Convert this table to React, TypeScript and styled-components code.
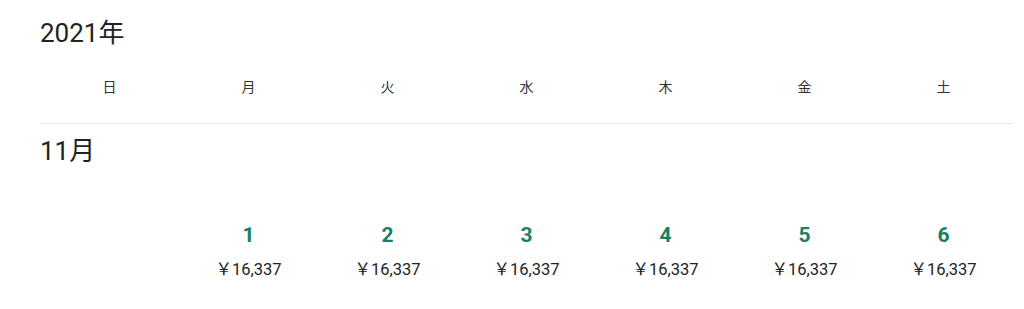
import styled, { createGlobalStyle } from 'styled-components'

const GlobalStyle = createGlobalStyle`
    body {
        margin: 0;
        background: #ffffff;
        font-family: Roboto, "Noto Sans CJK JP", sans-serif;
        color: #222222;
    }
`

const WEEKDAYS = ['日', '月', '火', '水', '木', '金', '土']

const days = [
    { day: 1, price: '16,337', col: 2 },
    { day: 2, price: '16,337', col: 3 },
    { day: 3, price: '16,337', col: 4 },
    { day: 4, price: '16,337', col: 5 },
    { day: 5, price: '16,337', col: 6 },
    { day: 6, price: '16,337', col: 7 },
]

const App = () => {
    return (
        <>
            <GlobalStyle />
            <Container>
                <Year>2021年</Year>
                <WeekRow>
                    {WEEKDAYS.map((w) => (
                        <WeekDay key={w}>{w}</WeekDay>
                    ))}
                </WeekRow>
                <Divider />
                <Month>11月</Month>
                <DayGrid>
                    {days.map((d) => (
                        <DayCell key={d.day} $col={d.col}>
                            <DayNumber>{d.day}</DayNumber>
                            <Price>￥{d.price}</Price>
                        </DayCell>
                    ))}
                </DayGrid>
            </Container>
        </>
    )
}

export default App

const Container = styled.div`
    display: flex;
    flex-direction: column;
    width: 973px;
    margin-left: 40px;
    padding-top: 18px;
`

const Year = styled.h2`
    margin: 0;
    font-size: 26px;
    line-height: 30px;
    font-weight: 400;
    color: #222222;
`

const WeekRow = styled.div`
    display: grid;
    grid-template-columns: repeat(7, 1fr);
    padding: 29px 0 26px;
`

const WeekDay = styled.div`
    text-align: center;
    font-size: 14px;
    line-height: 20px;
    color: #333333;
`

const Divider = styled.div`
    height: 1px;
    background: #e6eaea;
`

const Month = styled.h3`
    margin: 0;
    padding-top: 12px;
    font-size: 26px;
    line-height: 30px;
    font-weight: 400;
    color: #222222;
`

const DayGrid = styled.div`
    display: grid;
    grid-template-columns: repeat(7, 1fr);
    padding-top: 57px;
`

const DayCell = styled.div<{ $col: number }>`
    grid-column: ${(p) => p.$col};
    display: flex;
    flex-direction: column;
    align-items: center;
    gap: 12px;
`

const DayNumber = styled.span`
    font-size: 21px;
    line-height: 24px;
    font-weight: 700;
    color: #1b7f63;
`

const Price = styled.span`
    font-size: 16.5px;
    line-height: 22px;
    color: #222222;
`
